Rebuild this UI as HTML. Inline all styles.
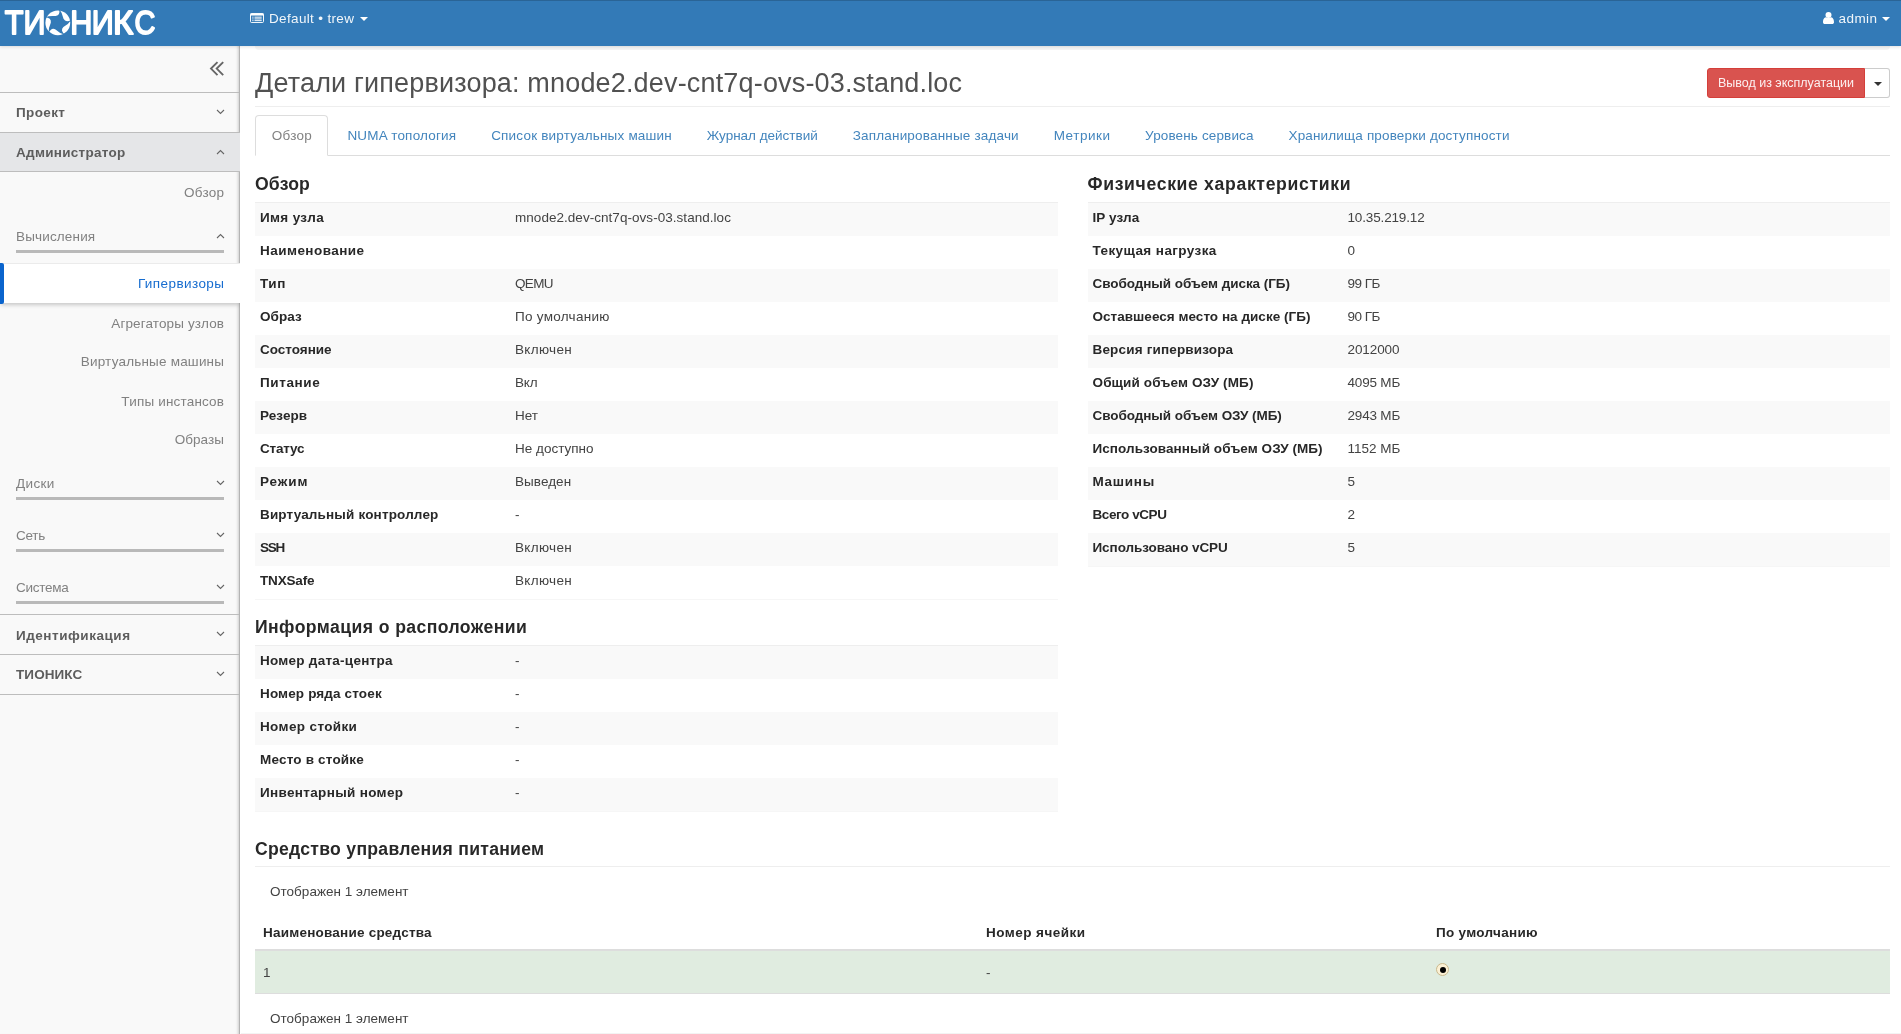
<!DOCTYPE html><html lang="ru"><head><meta charset="utf-8"><title>Детали гипервизора</title><style>
*{box-sizing:border-box}
html,body{margin:0;padding:0}
body{width:1901px;height:1034px;overflow:hidden;background:#fff;font-family:"Liberation Sans", sans-serif;font-size:13px;line-height:18px;color:#333;position:relative}
span{white-space:nowrap}
#wrap{position:absolute;left:0;top:0;width:1901px;height:1034px;will-change:transform}
#nav{position:absolute;left:0;top:0;width:1901px;height:46px;background:#337ab7;border-top:1px solid #2a6496;z-index:5;box-shadow:0 1px 3px rgba(0,0,0,.12)}
#logo{position:absolute;left:0;top:-1px}
#logo .lg{font-family:"Liberation Sans", sans-serif;font-size:34px;fill:#fff;font-weight:400;stroke:#fff;stroke-width:1.8px;stroke-linejoin:round;stroke-linecap:round}
#proj,#user{position:absolute;color:#fff;font-size:13px;line-height:18px;top:8px;white-space:nowrap}
#proj{left:250px}
#user{right:11px}
#proj .ic{position:relative;top:1px;margin-right:5px}
#user .ic{position:relative;top:2px;margin-right:5px}
.caret{display:inline-block;width:0;height:0;border-left:4px solid transparent;border-right:4px solid transparent;border-top:4px solid #333;vertical-align:middle}
.caret.w{border-top-color:#fff;margin-left:5px;position:relative;top:1px}
#proj .caret.w{margin-left:6px}
#side{position:absolute;left:0;top:46px;width:240px;height:988px;background:#f9f9f9;border-right:1px solid #b4b4b4;box-shadow:inset -3px 0 3px -2px rgba(0,0,0,.18)}
#side .tog{height:46px;position:relative}
#side .tog svg{position:absolute;left:209px;top:14px}
#side .l1{height:40px;border-top:1px solid #bdbdbd;padding:10px 0 0 16px;font-weight:700;color:#666;position:relative;line-height:18px}
#side .l1.act{background:#e5e6e8;border-bottom:1px solid #bdbdbd;width:240px}
#side .l1.idn{margin-top:-1px;padding-top:11px}
#side .l1.last{height:1px;padding:0}
#side .chev{position:absolute;left:216px;top:16px}
#side .it{height:39px;width:240px;padding:10px 16px 0 0;text-align:right;color:#777;position:relative}
#side .it.ov{height:40px;padding-top:11px}
#side .l2{height:52px;padding:15px 0 0 16px;color:#777;position:relative}
#side .l2 b{position:absolute;left:16px;width:208px;height:3px;background:#b9b9b9;top:38px}
#side .l2 .chev{top:21px}
#side .it.cur{background:#fff;width:240px;color:#0a64cd;box-shadow:0 3px 4px -1px rgba(0,0,0,.2);border-top:1px solid #ebebeb;padding-top:10px;margin-top:-1px;height:40px;z-index:2;clip-path:inset(-2px 0 -8px 0)}
#side .it.cur i{position:absolute;left:0;top:-1px;bottom:-1px;width:4px;background:#0a64cd;border-radius:0 2px 2px 0}
#main{position:absolute;left:255px;top:46px;width:1635px}
.crumb{height:4px;background:#f5f5f5;border-radius:0 0 4px 4px}
.hdr{position:relative;height:57px;border-bottom:1px solid #eee}
h1{margin:0;font-size:26px;font-weight:400;line-height:30px;position:absolute;left:0;top:17px;color:#333}
.btns{position:absolute;right:0;top:18px;height:30px;white-space:nowrap;font-size:0}
.btn{display:inline-block;height:30px;font-size:12px;line-height:18px;padding:5px 10px;border:1px solid #ccc;vertical-align:top}
.btn.red{background:#d9534f;border-color:#d43f3a;color:#fff;border-radius:3px 0 0 3px}
.btn.dd{background:#fff;border-left:0;border-radius:0 3px 3px 0;width:25px;padding:5px 0 0 9px}
ul.tabs{list-style:none;margin:8px 0 0;padding:0;height:41px;border-bottom:1px solid #ddd;display:flex}
ul.tabs li{height:41px;padding:10px 15px 0;margin-right:3px;color:#337ab7;border:1px solid transparent;border-radius:4px 4px 0 0}
ul.tabs li.on{color:#777;border-color:#ddd;border-bottom-color:#fff;background:#fff;padding:10px 15.75px 0}
.cols{display:flex;justify-content:space-between}
.col{width:802.5px}
h3{font-size:17px;font-weight:700;line-height:20px;margin:18px 0 8px;color:#333}
table{border-collapse:separate;border-spacing:0}
table.dt{width:100%;border-bottom:1px solid #f6f6f6}
table.dt tr:nth-child(odd) th,table.dt tr:nth-child(odd) td{background:#f9f9f9}
table.dt th{width:255px;height:33px;text-align:left;font-weight:700;padding:5px 5px 0;vertical-align:top}
table.dt td{height:33px;padding:5px 5px 0;vertical-align:top}
table.dt tr:first-child th,table.dt tr:first-child td{border-top:1px solid #eee;height:34px}
h3.pw{margin:27px 0 0;height:28px;border-bottom:1px solid #eee}
.cnt{padding-left:15px;height:18px;line-height:18px}
.cnt.top{margin-top:15px}
.cnt.bot{margin-top:15px}
table.lt{width:1635px;margin-top:15px;table-layout:fixed}
table.lt th{text-align:left;font-weight:700;height:36px;padding:8px 8px 0;border-bottom:2px solid #ddd;vertical-align:top}
table.lt th.c1{width:723px}table.lt th.c2{width:450px}table.lt th.c3{width:462px}
table.lt td{height:43px;background:#e0ece0;padding:12px 8px 0;border-bottom:1px solid #ddd;vertical-align:top}
.radio{display:inline-block;width:13px;height:13px;border-radius:50%;background:#fbf0d4;border:1px solid #c9b78c;position:relative;top:0px;left:0}
.radio i{position:absolute;left:2.5px;top:2.5px;width:6px;height:6px;border-radius:50%;background:#000}
.botline{position:absolute;left:241px;top:1033px;width:1660px;height:1px;background:#f3f3f3}
h3.h2nd{margin-top:17px}
.d1{position:relative;top:1px}
body{font-size:13.5px}
#proj,#user{font-size:13.5px}
h1{font-size:27px}
h3{font-size:17.6px}
.btn{font-size:12.5px}
span[id]{position:relative;top:1px}
h3 span[id],.btn span[id]{top:0}
body{color:#434343}
h1{color:#515151}
h3,table.dt th,table.lt th{color:#282828}
#side .l1{color:#5d5d5d}
#side .it,#side .l2{color:#818181}
#side .it.cur{color:#166ccf}
ul.tabs li{color:#4385bd}
ul.tabs li.on{color:#828282}
#proj,#user{color:#f1f6fa}
.btn.red{color:#fcf1f1}
span.d1[id]{top:2px}

</style></head><body><div id="wrap">
<div id="nav">
<svg id="logo" width="160" height="46" viewBox="0 0 160 46"><g transform="scale(0.9,1)"><text class="lg" y="34.15" x="5.37 26.07">ТИ</text><text class="lg" y="34.15" x="78.01 102.01">НИ</text></g><text class="lg" y="34.15" x="110.74" transform="scale(1.02,1)">К</text><text class="lg" y="34.15" x="158.2" transform="scale(0.85,1)">С</text><circle cx="57.8" cy="22.8" r="12.4" fill="#fff"/><path d="M59.02 8.85 Q62.61 13.36 63.53 18.78 Q65.69 23.21 71.44 19.65 Q68.27 24.46 63.39 27.01 Q59.84 30.43 65.01 34.80 Q59.46 33.27 55.52 29.42 Q51.17 27.10 48.62 33.37 Q48.36 27.61 50.80 22.68 Q51.66 17.83 44.91 17.33 Q50.30 15.30 55.75 16.11 Q60.63 15.42 59.02 8.85Z" fill="#337ab7"/></svg>
<div id="proj"><svg width="14" height="10" viewBox="0 0 14 11" preserveAspectRatio="none" class="ic"><rect x="0.5" y="0.5" width="13" height="10" rx="1.2" fill="none" stroke="#fff" stroke-width="1"/><rect x="0.5" y="0.5" width="13" height="2.3" fill="#fff"/><path d="M2.3 4.6h1.2M4.5 4.6h7.2M2.3 6.5h1.2M4.5 6.5h7.2M2.3 8.4h1.2M4.5 8.4h7.2" stroke="#fff" stroke-width="1"/></svg><span id="t1" style="letter-spacing:0.34px;margin-right:-0.34px">Default • trew</span><i class="caret w"></i></div>
<div id="user"><svg width="11" height="12" viewBox="0 0 11 12" class="ic"><circle cx="5.5" cy="3.1" r="3" fill="#fff"/><path d="M0 10.2 C0 6.2 2 5.2 3.2 5.2 C4 6 7 6 7.8 5.2 C9 5.2 11 6.2 11 10.2 C11 11.4 10.2 12 9.2 12 H1.8 C0.8 12 0 11.4 0 10.2Z" fill="#fff"/></svg><span id="t2" style="letter-spacing:0.42px;margin-right:-0.42px">admin</span><i class="caret w"></i></div>
</div>
<div id="side">
<div class="tog"><svg width="16" height="16" viewBox="0 0 16 16"><path d="M8.5 2.1 L2 8.6 L8.5 15.1 M14.2 2.1 L7.7 8.6 L14.2 15.1" fill="none" stroke="#666" stroke-width="1.9"/></svg></div>
<div class="l1"><span id="t3" style="letter-spacing:0.36px;margin-right:-0.36px">Проект</span><svg class="chev" width="9" height="6" viewBox="0 0 9 6"><path d="M1 1 L4.5 4.5 L8 1" fill="none" stroke="#666" stroke-width="1.1"/></svg></div>
<div class="l1 act"><span id="t4" style="letter-spacing:0.29px;margin-right:-0.29px">Администратор</span><svg class="chev" width="9" height="6" viewBox="0 0 9 6"><path d="M1 5 L4.5 1.5 L8 5" fill="none" stroke="#666" stroke-width="1.1"/></svg></div>
<div class="it ov"><span id="t5" style="letter-spacing:0.23px;margin-right:-0.23px">Обзор</span></div>
<div class="l2"><span id="t6" style="letter-spacing:0.16px;margin-right:-0.16px">Вычисления</span><svg class="chev" width="9" height="6" viewBox="0 0 9 6"><path d="M1 5 L4.5 1.5 L8 5" fill="none" stroke="#666" stroke-width="1.1"/></svg><b></b></div>
<div class="it cur"><i></i><span id="t7" style="letter-spacing:0.42px;margin-right:-0.42px">Гипервизоры</span></div>
<div class="it"><span id="t8" class="d1" style="letter-spacing:0.13px;margin-right:-0.13px">Агрегаторы узлов</span></div>
<div class="it"><span id="t9" style="letter-spacing:0.2px;margin-right:-0.2px">Виртуальные машины</span></div>
<div class="it"><span id="t10" class="d1" style="letter-spacing:0.18px;margin-right:-0.18px">Типы инстансов</span></div>
<div class="it"><span id="t11" style="letter-spacing:0.06px;margin-right:-0.06px">Образы</span></div>
<div class="l2"><span id="t12" style="letter-spacing:0.37px;margin-right:-0.37px">Диски</span><svg class="chev" width="9" height="6" viewBox="0 0 9 6"><path d="M1 1 L4.5 4.5 L8 1" fill="none" stroke="#666" stroke-width="1.1"/></svg><b></b></div>
<div class="l2"><span id="t13" style="letter-spacing:-0.25px;margin-right:0.25px">Сеть</span><svg class="chev" width="9" height="6" viewBox="0 0 9 6"><path d="M1 1 L4.5 4.5 L8 1" fill="none" stroke="#666" stroke-width="1.1"/></svg><b></b></div>
<div class="l2"><span id="t14" style="letter-spacing:-0.25px;margin-right:0.25px">Система</span><svg class="chev" width="9" height="6" viewBox="0 0 9 6"><path d="M1 1 L4.5 4.5 L8 1" fill="none" stroke="#666" stroke-width="1.1"/></svg><b></b></div>
<div class="l1 idn"><span id="t15" style="letter-spacing:0.53px;margin-right:-0.53px">Идентификация</span><svg class="chev" width="9" height="6" viewBox="0 0 9 6"><path d="M1 1 L4.5 4.5 L8 1" fill="none" stroke="#666" stroke-width="1.1"/></svg></div>
<div class="l1"><span id="t16" style="letter-spacing:0.09px;margin-right:-0.09px">ТИОНИКС</span><svg class="chev" width="9" height="6" viewBox="0 0 9 6"><path d="M1 1 L4.5 4.5 L8 1" fill="none" stroke="#666" stroke-width="1.1"/></svg></div>
<div class="l1 last"></div>
</div>
<div id="main">
<div class="crumb"></div>
<div class="hdr"><h1><span id="t17" style="letter-spacing:0.17px;margin-right:-0.17px">Детали гипервизора: mnode2.dev-cnt7q-ovs-03.stand.loc</span></h1><div class="btns"><span class="btn red"><span id="t18" style="letter-spacing:-0.01px;margin-right:0.01px">Вывод из эксплуатации</span></span><span class="btn dd"><i class="caret"></i></span></div></div>
<ul class="tabs"><li class="on"><span id="t19" style="letter-spacing:0.23px;margin-right:-0.23px">Обзор</span></li>
<li><span id="t20" style="letter-spacing:0.2px;margin-right:-0.2px">NUMA топология</span></li>
<li><span id="t21" style="letter-spacing:0.19px;margin-right:-0.19px">Список виртуальных машин</span></li>
<li><span id="t22" style="letter-spacing:-0.01px;margin-right:0.01px">Журнал действий</span></li>
<li><span id="t23" style="letter-spacing:0.18px;margin-right:-0.18px">Запланированные задачи</span></li>
<li><span id="t24" style="letter-spacing:0.53px;margin-right:-0.53px">Метрики</span></li>
<li><span id="t25" style="letter-spacing:0.14px;margin-right:-0.14px">Уровень сервиса</span></li>
<li><span id="t26" style="letter-spacing:0.16px;margin-right:-0.16px">Хранилища проверки доступности</span></li>
</ul>
<div class="cols"><div class="col">
<h3><span id="t27" style="letter-spacing:0.17px;margin-right:-0.17px">Обзор</span></h3><table class="dt">
<tr><th><span id="t28" style="letter-spacing:0.34px;margin-right:-0.34px">Имя узла</span></th><td><span id="t29" style="letter-spacing:0.04px;margin-right:-0.04px">mnode2.dev-cnt7q-ovs-03.stand.loc</span></td></tr>
<tr><th><span id="t30" style="letter-spacing:0.46px;margin-right:-0.46px">Наименование</span></th><td></td></tr>
<tr><th><span id="t31" style="letter-spacing:0.59px;margin-right:-0.59px">Тип</span></th><td><span id="t32" style="letter-spacing:-0.66px;margin-right:0.66px">QEMU</span></td></tr>
<tr><th><span id="t33" style="letter-spacing:0.06px;margin-right:-0.06px">Образ</span></th><td><span id="t34" style="letter-spacing:0.28px;margin-right:-0.28px">По умолчанию</span></td></tr>
<tr><th><span id="t35" style="letter-spacing:-0.01px;margin-right:0.01px">Состояние</span></th><td><span id="t36" style="letter-spacing:0.33px;margin-right:-0.33px">Включен</span></td></tr>
<tr><th><span id="t37" style="letter-spacing:0.61px;margin-right:-0.61px">Питание</span></th><td><span id="t38" style="letter-spacing:-0.2px;margin-right:0.2px">Вкл</span></td></tr>
<tr><th><span id="t39" style="letter-spacing:0.08px;margin-right:-0.08px">Резерв</span></th><td><span id="t40" style="letter-spacing:0.01px;margin-right:-0.01px">Нет</span></td></tr>
<tr><th><span id="t41" style="letter-spacing:-0.18px;margin-right:0.18px">Статус</span></th><td><span id="t42" style="letter-spacing:0.0px;margin-right:-0.0px">Не доступно</span></td></tr>
<tr><th><span id="t43" style="letter-spacing:0.92px;margin-right:-0.92px">Режим</span></th><td><span id="t44" style="letter-spacing:0.06px;margin-right:-0.06px">Выведен</span></td></tr>
<tr><th><span id="t45" style="letter-spacing:0.16px;margin-right:-0.16px">Виртуальный контроллер</span></th><td><span id="t46">-</span></td></tr>
<tr><th><span id="t47" style="letter-spacing:-1.3px;margin-right:1.3px">SSH</span></th><td><span id="t48" style="letter-spacing:0.33px;margin-right:-0.33px">Включен</span></td></tr>
<tr><th><span id="t49" style="letter-spacing:-0.17px;margin-right:0.17px">TNXSafe</span></th><td><span id="t50" style="letter-spacing:0.33px;margin-right:-0.33px">Включен</span></td></tr>
</table>
<h3 class="h2nd"><span id="t51" style="letter-spacing:0.42px;margin-right:-0.42px">Информация о расположении</span></h3><table class="dt">
<tr><th><span id="t52" style="letter-spacing:0.26px;margin-right:-0.26px">Номер дата-центра</span></th><td><span id="t53">-</span></td></tr>
<tr><th><span id="t54" style="letter-spacing:0.14px;margin-right:-0.14px">Номер ряда стоек</span></th><td><span id="t55">-</span></td></tr>
<tr><th><span id="t56" style="letter-spacing:0.37px;margin-right:-0.37px">Номер стойки</span></th><td><span id="t57">-</span></td></tr>
<tr><th><span id="t58" style="letter-spacing:0.19px;margin-right:-0.19px">Место в стойке</span></th><td><span id="t59">-</span></td></tr>
<tr><th><span id="t60" style="letter-spacing:0.33px;margin-right:-0.33px">Инвентарный номер</span></th><td><span id="t61">-</span></td></tr>
</table></div><div class="col r">
<h3><span id="t62" style="letter-spacing:0.67px;margin-right:-0.67px">Физические характеристики</span></h3><table class="dt">
<tr><th><span id="t63" style="letter-spacing:0.08px;margin-right:-0.08px">IP узла</span></th><td><span id="t64" style="letter-spacing:-0.15px;margin-right:0.15px">10.35.219.12</span></td></tr>
<tr><th><span id="t65" style="letter-spacing:0.41px;margin-right:-0.41px">Текущая нагрузка</span></th><td><span id="t66">0</span></td></tr>
<tr><th><span id="t67" style="letter-spacing:-0.06px;margin-right:0.06px">Свободный объем диска (ГБ)</span></th><td><span id="t68" style="letter-spacing:-0.49px;margin-right:0.49px">99 ГБ</span></td></tr>
<tr><th><span id="t69" style="letter-spacing:0.03px;margin-right:-0.03px">Оставшееся место на диске (ГБ)</span></th><td><span id="t70" style="letter-spacing:-0.49px;margin-right:0.49px">90 ГБ</span></td></tr>
<tr><th><span id="t71" style="letter-spacing:0.17px;margin-right:-0.17px">Версия гипервизора</span></th><td><span id="t72" style="letter-spacing:-0.09px;margin-right:0.09px">2012000</span></td></tr>
<tr><th><span id="t73" style="letter-spacing:0.13px;margin-right:-0.13px">Общий объем ОЗУ (МБ)</span></th><td><span id="t74" style="letter-spacing:-0.19px;margin-right:0.19px">4095 МБ</span></td></tr>
<tr><th><span id="t75" style="letter-spacing:-0.06px;margin-right:0.06px">Свободный объем ОЗУ (МБ)</span></th><td><span id="t76" style="letter-spacing:-0.19px;margin-right:0.19px">2943 МБ</span></td></tr>
<tr><th><span id="t77" style="letter-spacing:0.07px;margin-right:-0.07px">Использованный объем ОЗУ (МБ)</span></th><td><span id="t78" style="letter-spacing:-0.02px;margin-right:0.02px">1152 МБ</span></td></tr>
<tr><th><span id="t79" style="letter-spacing:0.71px;margin-right:-0.71px">Машины</span></th><td><span id="t80">5</span></td></tr>
<tr><th><span id="t81" style="letter-spacing:-0.42px;margin-right:0.42px">Всего vCPU</span></th><td><span id="t82">2</span></td></tr>
<tr><th><span id="t83" style="letter-spacing:-0.08px;margin-right:0.08px">Использовано vCPU</span></th><td><span id="t84">5</span></td></tr>
</table></div></div>
<h3 class="pw"><span id="t85" style="letter-spacing:0.28px;margin-right:-0.28px">Средство управления питанием</span></h3>
<div class="cnt top"><span id="t86" style="letter-spacing:0.02px;margin-right:-0.02px">Отображен 1 элемент</span></div>
<table class="lt"><thead><tr><th class="c1"><span id="t87" style="letter-spacing:0.22px;margin-right:-0.22px">Наименование средства</span></th><th class="c2"><span id="t88" style="letter-spacing:0.46px;margin-right:-0.46px">Номер ячейки</span></th><th class="c3"><span id="t89" style="letter-spacing:0.3px;margin-right:-0.3px">По умолчанию</span></th></tr></thead>
<tbody><tr><td><span id="t90">1</span></td><td><span id="t91">-</span></td><td><span class="radio"><i></i></span></td></tr></tbody></table>
<div class="cnt bot"><span id="t92" style="letter-spacing:0.02px;margin-right:-0.02px">Отображен 1 элемент</span></div>
</div>
<div class="botline"></div></div></body></html>
